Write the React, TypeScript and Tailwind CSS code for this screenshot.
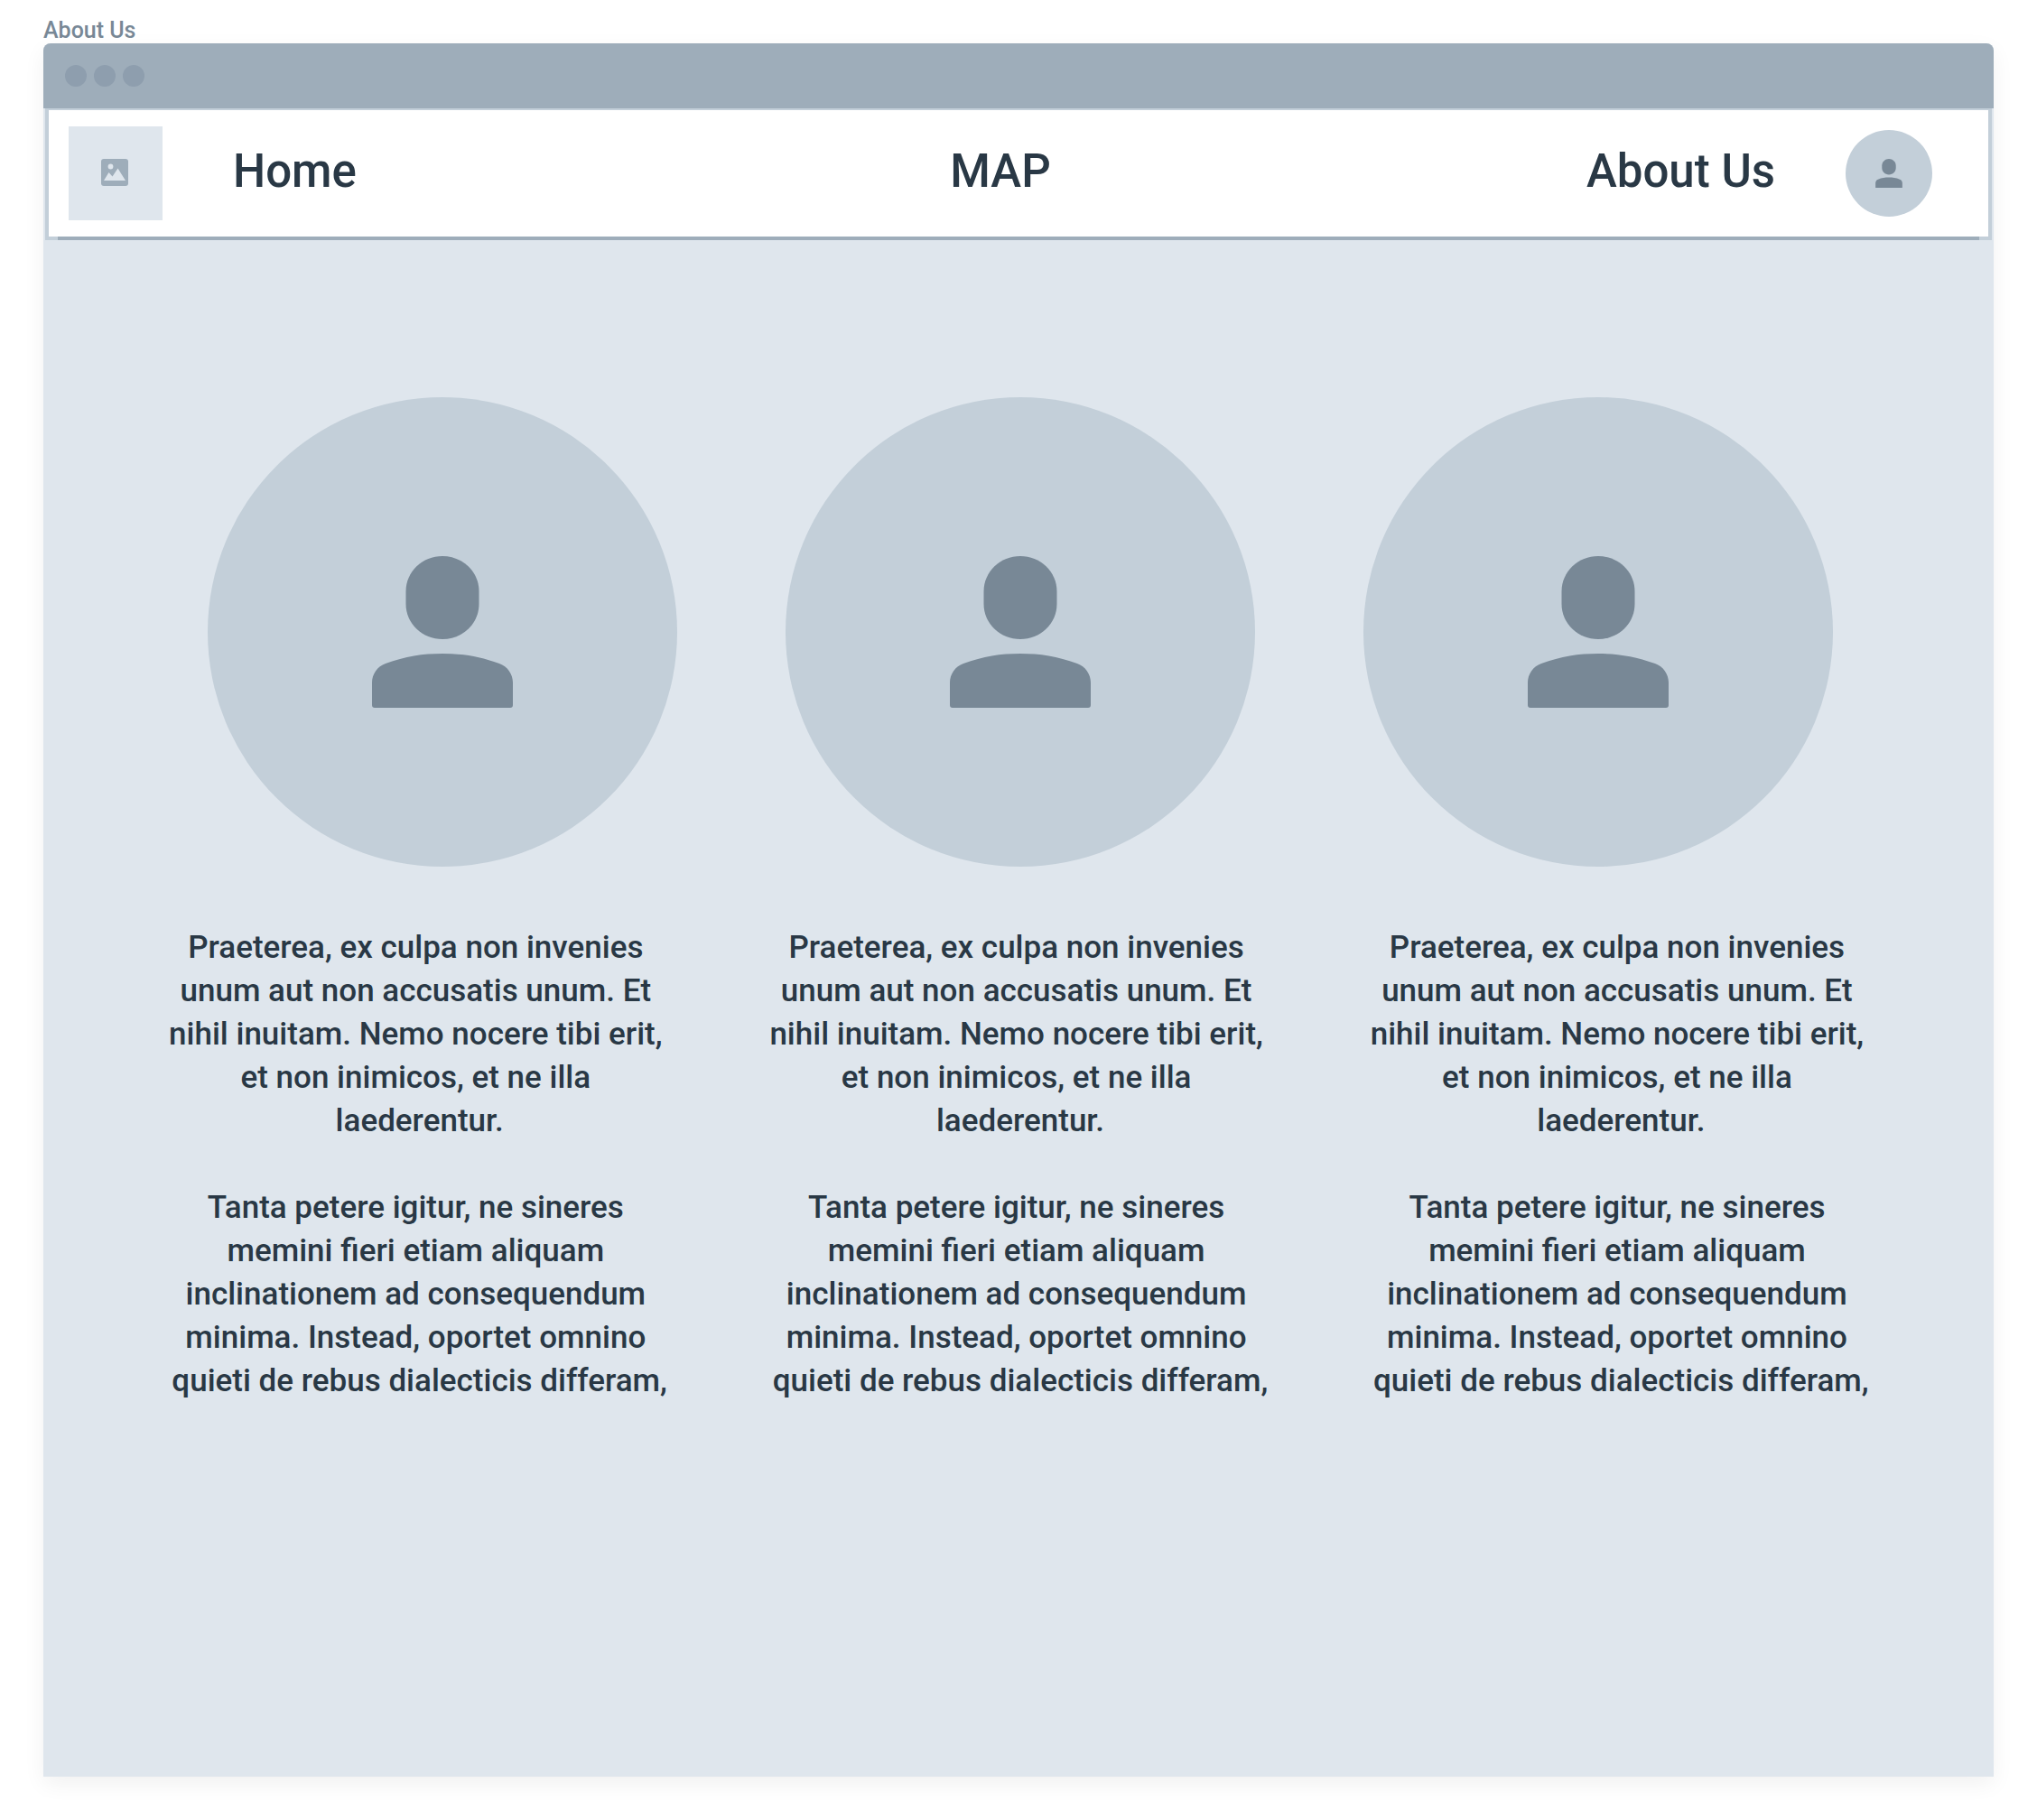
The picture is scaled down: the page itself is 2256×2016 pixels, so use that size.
const columns = ["first", "second", "third"];

// Every wrapped line keeps its trailing space, which counts when the line is centred.
const bio = [
  "Praeterea, ex culpa non invenies ",
  "unum aut non accusatis unum. Et ",
  "nihil inuitam. Nemo nocere tibi erit, ",
  "et non inimicos, et ne illa ",
  "laederentur.",
].join("\n");

const story = [
  "Tanta petere igitur, ne sineres ",
  "memini fieri etiam aliquam ",
  "inclinationem ad consequendum ",
  "minima. Instead, oportet omnino ",
  "quieti de rebus dialecticis differam,",
].join("\n");

function Person({ className }: { className: string }) {
  return (
    <svg viewBox="0 0 156 168" className={className} fill="currentColor" aria-hidden="true">
      <path d="M78 0C100 0 118.500 17 118.500 39V53C118.500 75 100 92 78 92C56 92 37.500 75 37.500 53V39C37.500 17 56 0 78 0Z" />
      <path d="M78 108C100 108 119 111 141 119C150 122 156 131 156 140V165Q156 168 153 168H3Q0 168 0 165V140C0 131 6 122 15 119C37 111 56 108 78 108Z" />
    </svg>
  );
}

function Picture() {
  return (
    <svg viewBox="0 0 30 30" className="size-[30px] text-[#9eadba]" aria-hidden="true">
      <rect width="30" height="30" rx="3" fill="currentColor" />
      <circle cx="10.500" cy="8.500" r="2.900" fill="#dfe6ed" />
      <path d="M3 24L8.500 15L12.500 19.500L18.500 10.500L27 24Z" fill="#dfe6ed" />
    </svg>
  );
}

export default function App() {
  return (
    <div className="flex min-h-screen flex-col bg-white px-12 pb-12 font-['Roboto',sans-serif] font-medium text-[#293845]">
      <div className="flex h-12 items-end text-[25px] leading-[28px] text-[#788896]">About Us</div>
      <div className="flex flex-1 flex-col rounded-t-lg bg-[#dfe6ed] shadow-[0_8px_24px_rgba(0,0,0,0.06)]">
        <div className="flex h-[72px] items-center gap-2 rounded-t-lg bg-[#9eadba] px-6">
          <span className="size-6 rounded-full bg-[#8e9eae]" />
          <span className="size-6 rounded-full bg-[#8e9eae]" />
          <span className="size-6 rounded-full bg-[#8e9eae]" />
        </div>

        <header className="relative mx-0.5 flex h-[146px] items-center border-4 border-t-2 border-[#c3cfd9] bg-white pr-[62px] pl-[22px]">
          <a href="#home" aria-label="Logo" className="flex size-[104px] items-center justify-center bg-[#dfe6ed] pr-0.5 pb-0.5">
            <Picture />
          </a>
          <nav className="mr-[78px] ml-[78px] grid flex-1 grid-cols-[1fr_auto_1fr] items-center pb-1 text-[51px] leading-[60px]">
            <a href="#home" className="justify-self-start">Home</a>
            <a href="#map" className="pr-2">MAP</a>
            <a href="#about" className="justify-self-end">About Us</a>
          </nav>
          <button type="button" aria-label="Profile" className="flex size-24 items-center justify-center rounded-full bg-[#c3cfd9] text-[#788896]">
            <Person className="h-8 w-[30px]" />
          </button>
          <div className="absolute inset-x-2.5 -bottom-1 h-1 bg-[#9eadba]" />
        </header>

        <main className="pt-[174px] pb-12">
          <div className="grid grid-cols-3 pr-[118px] pl-[122px]">
            {columns.map((c) => (
              <div key={c} className="flex size-[520px] items-center justify-center justify-self-center rounded-full bg-[#c3cfd9] text-[#788896]">
                <Person className="h-[168px] w-[156px]" />
              </div>
            ))}
          </div>
          <div className="mt-[66px] grid grid-cols-3 pr-[80px] pl-[84px] text-center text-[35px] leading-[48px]">
            {columns.map((c) => (
              <div key={c} className="flex flex-col items-center gap-12 whitespace-pre">
                <p>{bio}</p>
                <p>{story}</p>
              </div>
            ))}
          </div>
        </main>
      </div>
    </div>
  );
}
